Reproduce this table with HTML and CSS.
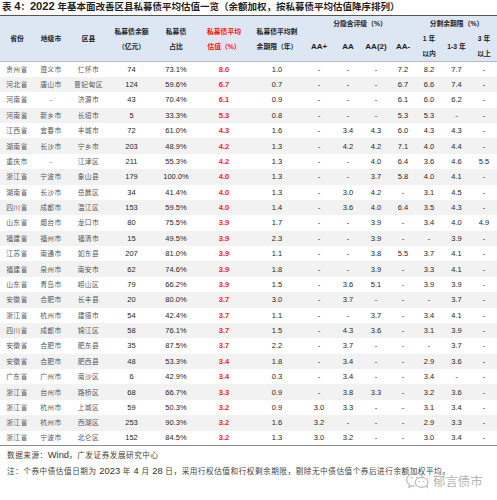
FILE: index.html
```html
<!DOCTYPE html>
<html lang="zh">
<head>
<meta charset="utf-8">
<link rel="stylesheet" href="styles.css">
</head>
<body>
<div class="page">
  <div class="title">表 <span class="lt">4</span>：<span class="lt">2022</span> 年基本面改善区县私募债平均估值一览（余额加权，按私募债平均估值降序排列）</div>
  <table class="tbl">
    <colgroup>
      <col style="width:34px"><col style="width:34px"><col style="width:41px"><col style="width:45px"><col style="width:44px"><col style="width:52px"><col style="width:54px"><col style="width:30px"><col style="width:28px"><col style="width:28px"><col style="width:26px"><col style="width:26px"><col style="width:29px"><col style="width:26px">
    </colgroup>
    <thead>
      <tr class="h1">
        <th rowspan="2">省份</th>
        <th rowspan="2">地级市</th>
        <th rowspan="2">区县</th>
        <th rowspan="2">私募债余额<br>（亿元）</th>
        <th rowspan="2">私募债<br>占比</th>
        <th rowspan="2" class="red">私募债平均<br>估值（%）</th>
        <th rowspan="2">私募债平均剩<br>余期限（年）</th>
        <th colspan="4">分隐含评级（%）</th>
        <th colspan="3">分剩余期限（%）</th>
      </tr>
      <tr class="h2">
        <th class="en">AA+</th>
        <th class="en">AA</th>
        <th class="en">AA(2)</th>
        <th class="en">AA-</th>
        <th>1 年<br>以内</th>
        <th>1-3 年</th>
        <th>3 年<br>以上</th>
      </tr>
    </thead>
    <tbody>
      <tr><td>贵州省</td><td>遵义市</td><td>仁怀市</td><td>74</td><td>73.1%</td><td>8.0</td><td>1.0</td><td>-</td><td>-</td><td>-</td><td>7.2</td><td>8.2</td><td>7.7</td><td>-</td></tr>
      <tr><td>河北省</td><td>唐山市</td><td>曹妃甸区</td><td>124</td><td>59.6%</td><td>6.7</td><td>0.7</td><td>-</td><td>-</td><td>-</td><td>6.7</td><td>6.6</td><td>7.4</td><td>-</td></tr>
      <tr><td>河南省</td><td>-</td><td>济源市</td><td>43</td><td>70.4%</td><td>6.1</td><td>0.9</td><td>-</td><td>-</td><td>-</td><td>6.1</td><td>6.0</td><td>6.2</td><td>-</td></tr>
      <tr><td>河南省</td><td>新乡市</td><td>长垣市</td><td>5</td><td>33.3%</td><td>5.3</td><td>0.8</td><td>-</td><td>-</td><td>-</td><td>5.3</td><td>5.3</td><td>-</td><td>-</td></tr>
      <tr><td>江西省</td><td>宜春市</td><td>丰城市</td><td>72</td><td>61.0%</td><td>4.3</td><td>1.6</td><td>-</td><td>3.4</td><td>4.3</td><td>6.0</td><td>4.3</td><td>4.3</td><td>-</td></tr>
      <tr><td>湖南省</td><td>长沙市</td><td>宁乡市</td><td>203</td><td>48.9%</td><td>4.2</td><td>1.3</td><td>-</td><td>4.2</td><td>4.2</td><td>7.1</td><td>4.0</td><td>4.4</td><td>-</td></tr>
      <tr><td>重庆市</td><td>-</td><td>江津区</td><td>211</td><td>55.3%</td><td>4.2</td><td>1.3</td><td>-</td><td>-</td><td>4.0</td><td>6.4</td><td>3.6</td><td>4.6</td><td>5.5</td></tr>
      <tr><td>浙江省</td><td>宁波市</td><td>象山县</td><td>179</td><td>100.0%</td><td>4.0</td><td>1.3</td><td>-</td><td>-</td><td>3.7</td><td>5.8</td><td>4.0</td><td>4.1</td><td>-</td></tr>
      <tr><td>湖南省</td><td>长沙市</td><td>岳麓区</td><td>34</td><td>41.4%</td><td>4.0</td><td>1.3</td><td>-</td><td>3.0</td><td>4.2</td><td>-</td><td>3.1</td><td>4.5</td><td>-</td></tr>
      <tr><td>四川省</td><td>成都市</td><td>温江区</td><td>153</td><td>59.5%</td><td>4.0</td><td>1.4</td><td>-</td><td>3.6</td><td>4.0</td><td>6.4</td><td>3.5</td><td>4.3</td><td>-</td></tr>
      <tr><td>山东省</td><td>烟台市</td><td>龙口市</td><td>80</td><td>75.5%</td><td>3.9</td><td>1.7</td><td>-</td><td>-</td><td>3.9</td><td>-</td><td>3.4</td><td>4.0</td><td>4.9</td></tr>
      <tr><td>福建省</td><td>福州市</td><td>福清市</td><td>15</td><td>49.5%</td><td>3.9</td><td>2.3</td><td>-</td><td>-</td><td>3.9</td><td>-</td><td>-</td><td>3.9</td><td>-</td></tr>
      <tr><td>江苏省</td><td>南通市</td><td>如东县</td><td>207</td><td>81.0%</td><td>3.9</td><td>1.1</td><td>-</td><td>-</td><td>3.8</td><td>5.5</td><td>3.7</td><td>4.1</td><td>-</td></tr>
      <tr><td>福建省</td><td>泉州市</td><td>南安市</td><td>62</td><td>74.6%</td><td>3.9</td><td>1.8</td><td>-</td><td>-</td><td>3.9</td><td>-</td><td>3.3</td><td>4.1</td><td>-</td></tr>
      <tr><td>山东省</td><td>青岛市</td><td>崂山区</td><td>79</td><td>66.2%</td><td>3.9</td><td>1.5</td><td>-</td><td>3.6</td><td>5.1</td><td>-</td><td>3.9</td><td>3.9</td><td>-</td></tr>
      <tr><td>安徽省</td><td>合肥市</td><td>长丰县</td><td>20</td><td>80.0%</td><td>3.7</td><td>3.0</td><td>-</td><td>3.7</td><td>-</td><td>-</td><td>-</td><td>3.7</td><td>-</td></tr>
      <tr><td>浙江省</td><td>杭州市</td><td>建德市</td><td>54</td><td>42.4%</td><td>3.7</td><td>1.1</td><td>-</td><td>-</td><td>3.7</td><td>-</td><td>3.4</td><td>4.1</td><td>-</td></tr>
      <tr><td>四川省</td><td>成都市</td><td>锦江区</td><td>58</td><td>76.1%</td><td>3.7</td><td>1.5</td><td>-</td><td>4.3</td><td>3.6</td><td>-</td><td>3.1</td><td>3.9</td><td>-</td></tr>
      <tr><td>安徽省</td><td>合肥市</td><td>肥东县</td><td>35</td><td>87.5%</td><td>3.7</td><td>2.2</td><td>-</td><td>3.7</td><td>-</td><td>-</td><td>-</td><td>3.7</td><td>-</td></tr>
      <tr><td>安徽省</td><td>合肥市</td><td>肥西县</td><td>48</td><td>53.3%</td><td>3.4</td><td>1.8</td><td>-</td><td>3.4</td><td>-</td><td>-</td><td>2.9</td><td>3.6</td><td>-</td></tr>
      <tr><td>广东省</td><td>广州市</td><td>南沙区</td><td>6</td><td>42.9%</td><td>3.4</td><td>0.3</td><td>-</td><td>3.4</td><td>-</td><td>-</td><td>3.4</td><td>-</td><td>-</td></tr>
      <tr><td>浙江省</td><td>台州市</td><td>路桥区</td><td>68</td><td>66.7%</td><td>3.3</td><td>0.9</td><td>-</td><td>3.8</td><td>3.3</td><td>-</td><td>3.2</td><td>3.6</td><td>-</td></tr>
      <tr><td>浙江省</td><td>杭州市</td><td>上城区</td><td>59</td><td>50.3%</td><td>3.2</td><td>0.9</td><td>3.0</td><td>3.3</td><td>-</td><td>-</td><td>3.1</td><td>3.4</td><td>-</td></tr>
      <tr><td>浙江省</td><td>杭州市</td><td>西湖区</td><td>253</td><td>90.3%</td><td>3.2</td><td>1.6</td><td>3.2</td><td>-</td><td>-</td><td>-</td><td>2.9</td><td>3.3</td><td>-</td></tr>
      <tr><td>浙江省</td><td>宁波市</td><td>北仑区</td><td>152</td><td>84.5%</td><td>3.2</td><td>1.3</td><td>3.0</td><td>3.2</td><td>-</td><td>-</td><td>3.0</td><td>3.4</td><td>-</td></tr>
    </tbody>
  </table>
  <div class="src">数据来源：<span class="lt">Wind</span>，广发证券发展研究中心</div>
  <div class="note">注：个券中债估值日期为 <span class="lt">2023</span> 年 <span class="lt">4</span> 月 <span class="lt">28</span> 日，采用行权估值和行权剩余期限，剔除无中债估值个券后进行余额加权平均。</div>
  <div class="wm">
    <svg class="wm-icon" width="26" height="17" viewBox="0 0 26 17">
      <path d="M10 1.2c-4.6 0-8.3 2.9-8.3 6.5 0 2 1.1 3.8 2.9 5l-.8 2.6 3-1.6c1 .3 2.1.5 3.2.5" fill="none" stroke="#b9b9b9" stroke-width="1.1"/>
      <path d="M18.2 5.6c-0.9-2.6-4.3-4.4-8.2-4.4" fill="none" stroke="#b9b9b9" stroke-width="1.1"/>
      <ellipse cx="16.6" cy="10.4" rx="6.4" ry="5" fill="#fff" fill-opacity="0.6" stroke="#b9b9b9" stroke-width="1.1"/>
      <path d="M21 14.2l1.6 2-.3-2.6" fill="none" stroke="#b9b9b9" stroke-width="1"/>
      <circle cx="7" cy="5.6" r="0.9" fill="#b9b9b9"/>
      <circle cx="12" cy="5.6" r="0.9" fill="#b9b9b9"/>
      <circle cx="14.4" cy="9.6" r="0.75" fill="#b9b9b9"/>
      <circle cx="18.6" cy="9.6" r="0.75" fill="#b9b9b9"/>
    </svg>
    <span class="wm-text">郁言债市</span>
  </div>
</div>
</body>
</html>
```
FILE: styles.css
```css
* { box-sizing: border-box; }
html, body { margin: 0; padding: 0; background: #fff; }
body {
  font-family: "Liberation Sans", "Noto Sans CJK SC", sans-serif;
  color: #222;
}
.page {
  position: relative;
  width: 497px;
  height: 500px;
  overflow: hidden;
}
.title {
  height: 15px;
  line-height: 13px;
  padding-left: 2px;
  font-size: 9.5px;
  font-weight: bold;
  color: #1f1f1f;
  white-space: nowrap;
}
.title .lt { font-size: 11.2px; }
.tbl {
  width: 497px;
  table-layout: fixed;
  border-collapse: collapse;
  border-top: 1px solid #555;
  border-bottom: 1.5px solid #8a8a8a;
}
.tbl thead th {
  background: #dce7f3;
  font-size: 6.8px;
  font-weight: bold;
  line-height: 15px;
  padding: 0;
  text-align: center;
  vertical-align: middle;
  color: #222;
  white-space: nowrap;
}
.tbl thead th.en { font-size: 8px; }
.tbl thead th.red { color: #ff1010; }
.tbl .h1 { height: 15px; }
.tbl .h2 { height: 30px; }
.tbl thead tr.h2 th { border-bottom: 1px solid #b8bcc2; }
.tbl thead tr.h1 th[rowspan] { border-bottom: 1px solid #b8bcc2; }
.tbl tbody tr { height: 15.375px; }
.tbl tbody tr:nth-child(even) td { background: #f2f2f2; }
.tbl td {
  padding: 0;
  text-align: center;
  vertical-align: middle;
  font-size: 7.5px;
  line-height: 9px;
  color: #262626;
  white-space: nowrap;
}
.tbl td:nth-child(-n+3) {
  font-size: 6.8px;
  letter-spacing: 0.45px;
  color: #575757;
}
.tbl td:nth-child(6) {
  color: #ff1a1a;
  font-weight: bold;
}
.src, .note {
  padding-left: 7px;
  font-size: 7.6px;
  letter-spacing: 0.55px;
  color: #444;
  line-height: 16px;
  height: 16px;
  white-space: nowrap;
}
.src { margin-top: 1px; }
.src .lt, .note .lt { font-size: 9.4px; letter-spacing: 0; color: #333; }
.wm {
  position: absolute;
  left: 405px;
  top: 472px;
  display: flex;
  align-items: center;
  gap: 2px;
}
.wm-text {
  font-family: "Noto Sans CJK SC", sans-serif;
  font-size: 12.4px;
  line-height: 16px;
  color: #b5b5b5;
  text-shadow: 0 0 2px #fff;
}
```
